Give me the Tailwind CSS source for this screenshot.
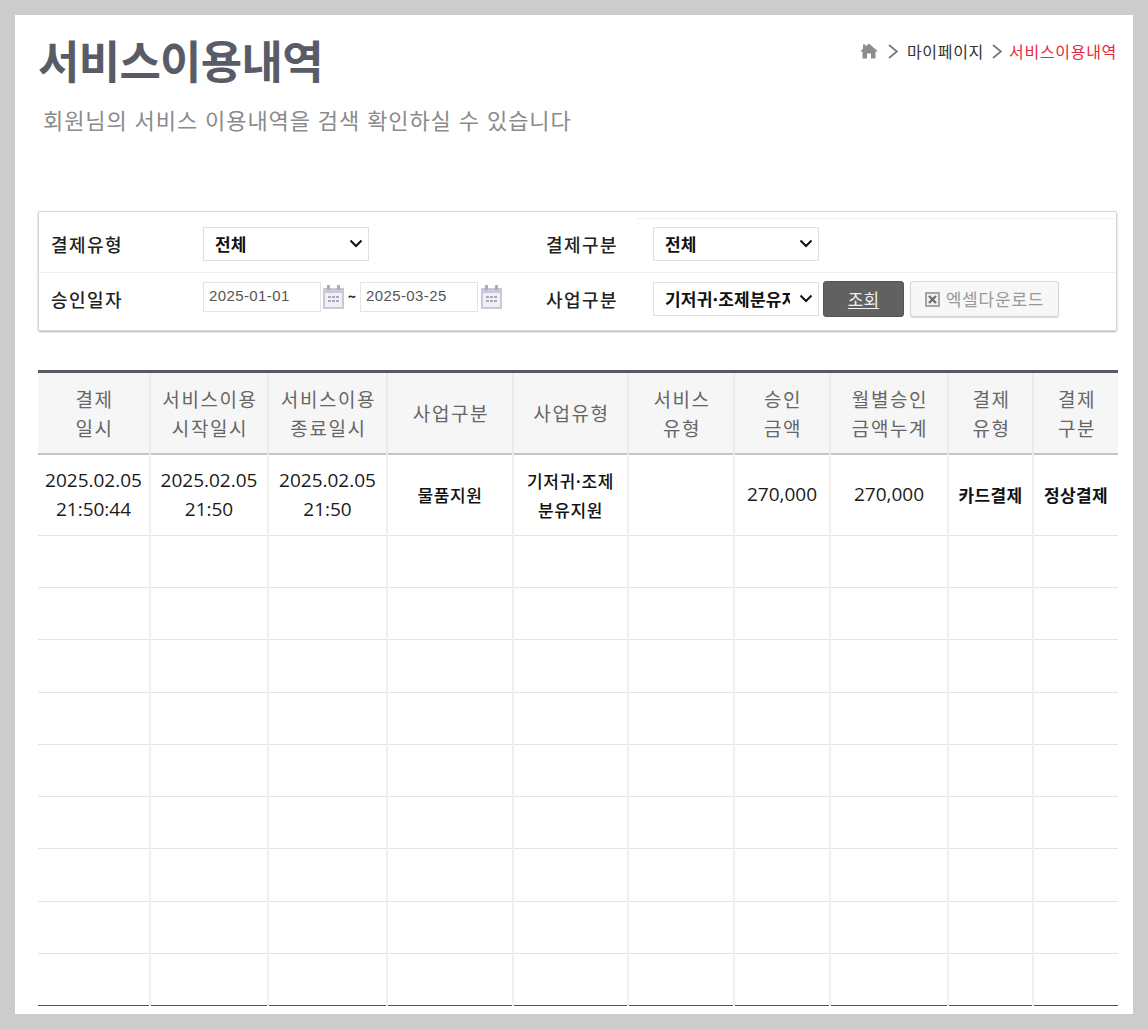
<!DOCTYPE html>
<html lang="ko">
<head>
<meta charset="utf-8">
<script src="https://cdn.jsdelivr.net/npm/@tailwindcss/browser@4"></script>
</head>
<body class="bg-[#cccccc] font-['Noto_Sans_CJK_KR','Noto_Sans',sans-serif]">
<div class="w-[1148px] h-[1029px] p-[15px] overflow-hidden">
  <main class="relative w-[1118px] h-[999px] bg-white pl-[23px]">
    <div class="flex justify-between w-[1079px]">
      <div>
        <h1 class="h-[65px] pt-[15px] text-[45px] leading-[60px] font-semibold tracking-[-0.7px] text-[#595c66]">서비스이용내역</h1>
        <p class="pl-[5px] mt-[19px] text-[22px] leading-[40px] h-[40px] text-[#8a8a8a] tracking-[0.9px]">회원님의 서비스 이용내역을 검색 확인하실 수 있습니다</p>
      </div>
      <nav class="flex items-center h-[20px] mt-[26px] text-[16px] text-[#333]">
        <svg class="w-[18px] h-[16px] mr-[10px]" viewBox="0 0 18 16" fill="#8c8c8c"><path d="M9 0.5 L18 8.5 L15.5 8.5 L15.5 15.5 L11 15.5 L11 10.5 L7 10.5 L7 15.5 L2.5 15.5 L2.5 8.5 L0 8.5 L3 5.8 L3 1.5 L5.5 1.5 L5.5 3.6 Z"/></svg>
        <svg class="w-[10px] h-[15px] mr-[9px]" viewBox="0 0 10 15" fill="none" stroke="#777" stroke-width="1.8"><path d="M1 1l8 6.5-8 6.5"/></svg>
        <span class="tracking-[0.7px]">마이페이지</span>
        <svg class="w-[10px] h-[15px] ml-[8px] mr-[7px]" viewBox="0 0 10 15" fill="none" stroke="#777" stroke-width="1.8"><path d="M1 1l8 6.5-8 6.5"/></svg>
        <span class="text-[#e8283c] tracking-[0.7px]">서비스이용내역</span>
      </nav>
    </div>

    <section class="w-[1079px] h-[120px] mt-[72px] border border-[#d4d4d4] rounded-[2px] shadow-[0_1px_2px_rgba(0,0,0,0.3)] text-[18px] font-medium text-[#222]">
      <div class="flex items-center h-[61px] pt-[3px] border-b border-[#f0f0f0] pl-[12px] relative">
        <div class="absolute left-[598px] right-0 top-[6px] h-px bg-[#f0f0f0]"></div>
        <span class="w-[152px] mt-[1px] tracking-[1.4px]">결제유형</span>
        <div class="flex items-center justify-between w-[166px] h-[34px] border border-[#e0e0e0] pl-[11px] pr-[5px] text-[17px] font-bold text-[#111]">
          <span>전체</span>
          <svg class="w-[14px] h-[9px]" viewBox="0 0 14 9" fill="none" stroke="#111" stroke-width="2"><path d="M1.5 1.5L7 7l5.5-5.5"/></svg>
        </div>
        <span class="ml-[177px] mt-[1px] w-[107px] tracking-[1.4px]">결제구분</span>
        <div class="flex items-center justify-between w-[166px] h-[34px] border border-[#e0e0e0] pl-[11px] pr-[5px] text-[17px] font-bold text-[#111]">
          <span>전체</span>
          <svg class="w-[14px] h-[9px]" viewBox="0 0 14 9" fill="none" stroke="#111" stroke-width="2"><path d="M1.5 1.5L7 7l5.5-5.5"/></svg>
        </div>
      </div>
      <div class="flex items-center h-[57px] pb-[6px] pl-[12px]">
        <span class="w-[152px] mt-[2px] tracking-[1.4px]">승인일자</span>
        <div class="flex items-center w-[118px] h-[30px] mb-[4px] border border-[#e4e4e4] pl-[5px] text-[15px] tracking-[0.4px] font-normal text-[#555] font-['Liberation_Sans',sans-serif]">2025-01-01</div>
        <svg class="w-[21px] h-[24px] ml-[2px] mb-[4px]" viewBox="0 0 21 24"><path fill="#c8c8d8" d="M0 3h21v21H0z"/><path fill="#f0f0f5" d="M2 8h17v14H2z"/><path fill="#aaaabc" d="M4 0h3v5H4zM14 0h3v5h-3zM5 11h3v2H5zM9 11h3v2H9zM13 11h3v2h-3zM5 15h3v2H5zM9 15h3v2H9zM13 15h3v2h-3z"/></svg>
        <span class="w-[16px] mb-[4px] text-center text-[14px] font-bold">~</span>
        <div class="flex items-center w-[118px] h-[30px] mb-[4px] border border-[#e4e4e4] pl-[5px] text-[15px] tracking-[0.4px] font-normal text-[#555] font-['Liberation_Sans',sans-serif]">2025-03-25</div>
        <svg class="w-[21px] h-[24px] ml-[3px] mb-[4px]" viewBox="0 0 21 24"><path fill="#c8c8d8" d="M0 3h21v21H0z"/><path fill="#f0f0f5" d="M2 8h17v14H2z"/><path fill="#aaaabc" d="M4 0h3v5H4zM14 0h3v5h-3zM5 11h3v2H5zM9 11h3v2H9zM13 11h3v2h-3zM5 15h3v2H5zM9 15h3v2H9zM13 15h3v2h-3z"/></svg>
        <span class="ml-[44px] mt-[2px] w-[107px] tracking-[1.4px]">사업구분</span>
        <div class="flex items-center justify-between w-[166px] h-[34px] border border-[#e0e0e0] pl-[11px] pr-[5px] text-[17px] font-bold text-[#111]">
          <span class="w-[125px] overflow-hidden whitespace-nowrap tracking-[0.2px]">기저귀·조제분유지원</span>
          <svg class="w-[14px] h-[9px] shrink-0" viewBox="0 0 14 9" fill="none" stroke="#111" stroke-width="2"><path d="M1.5 1.5L7 7l5.5-5.5"/></svg>
        </div>
        <button class="ml-[4px] mt-[1px] w-[81px] h-[36px] rounded-[3px] border border-[#555] bg-[#616161] text-[#f0f0f0] text-[17px] font-normal underline underline-offset-2">조회</button>
        <button class="flex items-center justify-center gap-[6px] ml-[6px] mt-[1px] w-[149px] h-[36px] rounded-[3px] border border-[#d5d5d5] bg-[#f7f7f7] shadow-[0_1px_1px_rgba(0,0,0,0.15)] text-[#999] text-[17px] font-normal tracking-[0.8px]">
          <svg class="w-[15px] h-[15px]" viewBox="0 0 15 15"><path fill="#f2f2f2" stroke="#8d8d8d" stroke-width="1.5" d="M1 1h13v13H1z"/><path fill="none" stroke="#6f6f6f" stroke-width="2.4" d="M4 4l7 7M11 4l-7 7"/></svg>
          엑셀다운로드
        </button>
      </div>
    </section>

    <table class="table-fixed w-[1080px] mt-[39px] border-collapse border-t-[3px] border-b border-t-[#555a64] border-b-[#555] text-[#1a1a1a]">
      <colgroup>
        <col class="w-[112px]"><col class="w-[118px]"><col class="w-[119px]"><col class="w-[126px]"><col class="w-[115px]"><col class="w-[106px]"><col class="w-[96px]"><col class="w-[118px]"><col class="w-[85px]"><col class="w-[85px]">
      </colgroup>
      <thead>
        <tr class="h-[82px] bg-[#f6f6f6] text-[19px] leading-[29px] font-normal text-[#666] tracking-[1.6px] border-b-2 border-b-[#c4c4c4] [&>th]:pl-[2px]">
          <th class="font-normal border-r-2 border-[#ebebeb]">결제<br>일시</th>
          <th class="font-normal border-r-2 border-[#ebebeb]">서비스이용<br>시작일시</th>
          <th class="font-normal border-r-2 border-[#ebebeb]">서비스이용<br>종료일시</th>
          <th class="font-normal border-r-2 border-[#ebebeb]">사업구분</th>
          <th class="font-normal border-r-2 border-[#ebebeb]">사업유형</th>
          <th class="font-normal border-r-2 border-[#ebebeb]">서비스<br>유형</th>
          <th class="font-normal border-r-2 border-[#ebebeb]">승인<br>금액</th>
          <th class="font-normal border-r-2 border-[#ebebeb]">월별승인<br>금액누계</th>
          <th class="font-normal border-r-2 border-[#ebebeb]">결제<br>유형</th>
          <th class="font-normal">결제<br>구분</th>
        </tr>
      </thead>
      <tbody class="text-center">
        <tr class="h-[82px] border-b border-b-[#e4e4e4] text-[19px] leading-[29px] font-['Open_Sans','Noto_Sans',sans-serif]">
          <td class="border-r-2 border-[#f0f0f0]">2025.02.05<br>21:50:44</td>
          <td class="border-r-2 border-[#f0f0f0]">2025.02.05<br>21:50</td>
          <td class="border-r-2 border-[#f0f0f0]">2025.02.05<br>21:50</td>
          <td class="border-r-2 border-[#f0f0f0] text-[17px] tracking-[0.6px] font-medium font-['Noto_Sans_CJK_KR',sans-serif] text-[#111]">물품지원</td>
          <td class="border-r-2 border-[#f0f0f0] text-[17px] tracking-[0.6px] font-medium font-['Noto_Sans_CJK_KR',sans-serif] text-[#111]">기저귀·조제<br>분유지원</td>
          <td class="border-r-2 border-[#f0f0f0]"></td>
          <td class="border-r-2 border-[#f0f0f0]">270,000</td>
          <td class="border-r-2 border-[#f0f0f0]">270,000</td>
          <td class="border-r-2 border-[#f0f0f0] text-[17px] tracking-[0.4px] font-bold font-['Noto_Sans_CJK_KR',sans-serif] text-[#111]">카드결제</td>
          <td class="text-[17px] tracking-[0.4px] font-bold font-['Noto_Sans_CJK_KR',sans-serif] text-[#111]">정상결제</td>
        </tr>
        <tr class="h-[52px] border-b border-b-[#e4e4e4]"><td class="border-r-2 border-[#f0f0f0]"></td><td class="border-r-2 border-[#f0f0f0]"></td><td class="border-r-2 border-[#f0f0f0]"></td><td class="border-r-2 border-[#f0f0f0]"></td><td class="border-r-2 border-[#f0f0f0]"></td><td class="border-r-2 border-[#f0f0f0]"></td><td class="border-r-2 border-[#f0f0f0]"></td><td class="border-r-2 border-[#f0f0f0]"></td><td class="border-r-2 border-[#f0f0f0]"></td><td></td></tr>
        <tr class="h-[52px] border-b border-b-[#e4e4e4]"><td class="border-r-2 border-[#f0f0f0]"></td><td class="border-r-2 border-[#f0f0f0]"></td><td class="border-r-2 border-[#f0f0f0]"></td><td class="border-r-2 border-[#f0f0f0]"></td><td class="border-r-2 border-[#f0f0f0]"></td><td class="border-r-2 border-[#f0f0f0]"></td><td class="border-r-2 border-[#f0f0f0]"></td><td class="border-r-2 border-[#f0f0f0]"></td><td class="border-r-2 border-[#f0f0f0]"></td><td></td></tr>
        <tr class="h-[53px] border-b border-b-[#e4e4e4]"><td class="border-r-2 border-[#f0f0f0]"></td><td class="border-r-2 border-[#f0f0f0]"></td><td class="border-r-2 border-[#f0f0f0]"></td><td class="border-r-2 border-[#f0f0f0]"></td><td class="border-r-2 border-[#f0f0f0]"></td><td class="border-r-2 border-[#f0f0f0]"></td><td class="border-r-2 border-[#f0f0f0]"></td><td class="border-r-2 border-[#f0f0f0]"></td><td class="border-r-2 border-[#f0f0f0]"></td><td></td></tr>
        <tr class="h-[52px] border-b border-b-[#e4e4e4]"><td class="border-r-2 border-[#f0f0f0]"></td><td class="border-r-2 border-[#f0f0f0]"></td><td class="border-r-2 border-[#f0f0f0]"></td><td class="border-r-2 border-[#f0f0f0]"></td><td class="border-r-2 border-[#f0f0f0]"></td><td class="border-r-2 border-[#f0f0f0]"></td><td class="border-r-2 border-[#f0f0f0]"></td><td class="border-r-2 border-[#f0f0f0]"></td><td class="border-r-2 border-[#f0f0f0]"></td><td></td></tr>
        <tr class="h-[52px] border-b border-b-[#e4e4e4]"><td class="border-r-2 border-[#f0f0f0]"></td><td class="border-r-2 border-[#f0f0f0]"></td><td class="border-r-2 border-[#f0f0f0]"></td><td class="border-r-2 border-[#f0f0f0]"></td><td class="border-r-2 border-[#f0f0f0]"></td><td class="border-r-2 border-[#f0f0f0]"></td><td class="border-r-2 border-[#f0f0f0]"></td><td class="border-r-2 border-[#f0f0f0]"></td><td class="border-r-2 border-[#f0f0f0]"></td><td></td></tr>
        <tr class="h-[52px] border-b border-b-[#e4e4e4]"><td class="border-r-2 border-[#f0f0f0]"></td><td class="border-r-2 border-[#f0f0f0]"></td><td class="border-r-2 border-[#f0f0f0]"></td><td class="border-r-2 border-[#f0f0f0]"></td><td class="border-r-2 border-[#f0f0f0]"></td><td class="border-r-2 border-[#f0f0f0]"></td><td class="border-r-2 border-[#f0f0f0]"></td><td class="border-r-2 border-[#f0f0f0]"></td><td class="border-r-2 border-[#f0f0f0]"></td><td></td></tr>
        <tr class="h-[53px] border-b border-b-[#e4e4e4]"><td class="border-r-2 border-[#f0f0f0]"></td><td class="border-r-2 border-[#f0f0f0]"></td><td class="border-r-2 border-[#f0f0f0]"></td><td class="border-r-2 border-[#f0f0f0]"></td><td class="border-r-2 border-[#f0f0f0]"></td><td class="border-r-2 border-[#f0f0f0]"></td><td class="border-r-2 border-[#f0f0f0]"></td><td class="border-r-2 border-[#f0f0f0]"></td><td class="border-r-2 border-[#f0f0f0]"></td><td></td></tr>
        <tr class="h-[52px] border-b border-b-[#e4e4e4]"><td class="border-r-2 border-[#f0f0f0]"></td><td class="border-r-2 border-[#f0f0f0]"></td><td class="border-r-2 border-[#f0f0f0]"></td><td class="border-r-2 border-[#f0f0f0]"></td><td class="border-r-2 border-[#f0f0f0]"></td><td class="border-r-2 border-[#f0f0f0]"></td><td class="border-r-2 border-[#f0f0f0]"></td><td class="border-r-2 border-[#f0f0f0]"></td><td class="border-r-2 border-[#f0f0f0]"></td><td></td></tr>
        <tr class="h-[52px]"><td class="border-r-2 border-[#f0f0f0]"></td><td class="border-r-2 border-[#f0f0f0]"></td><td class="border-r-2 border-[#f0f0f0]"></td><td class="border-r-2 border-[#f0f0f0]"></td><td class="border-r-2 border-[#f0f0f0]"></td><td class="border-r-2 border-[#f0f0f0]"></td><td class="border-r-2 border-[#f0f0f0]"></td><td class="border-r-2 border-[#f0f0f0]"></td><td class="border-r-2 border-[#f0f0f0]"></td><td></td></tr>
      </tbody>
    </table>
  </main>
</div>
</body>
</html>
